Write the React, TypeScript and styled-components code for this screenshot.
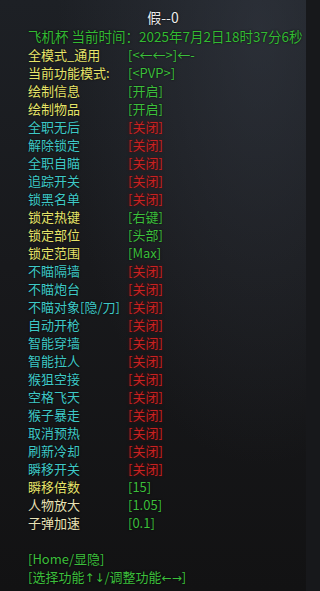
import styled, { createGlobalStyle } from 'styled-components';

const GlobalStyle = createGlobalStyle`
  html, body {
    margin: 0;
    padding: 0;
    background: #17181b;
  }
  body {
    font-family: "Noto Sans CJK SC", "Microsoft YaHei", sans-serif;
  }
`;

type Tone = 'yellow' | 'cyan' | 'cream' | 'green' | 'red';

const colors: Record<Tone, string> = {
  yellow: '#e6e46a',
  cyan: '#3ec8c6',
  cream: '#e9e2b6',
  green: '#3cbf3c',
  red: '#c82222',
};

const rows: [string, Tone, string, Tone][] = [
  ['全模式_通用', 'yellow', '[<←←>]←-', 'green'],
  ['当前功能模式:', 'yellow', '[<PVP>]', 'green'],
  ['绘制信息', 'yellow', '[开启]', 'green'],
  ['绘制物品', 'yellow', '[开启]', 'green'],
  ['全职无后', 'cyan', '[关闭]', 'red'],
  ['解除锁定', 'cyan', '[关闭]', 'red'],
  ['全职自瞄', 'cyan', '[关闭]', 'red'],
  ['追踪开关', 'cyan', '[关闭]', 'red'],
  ['锁黑名单', 'cyan', '[关闭]', 'red'],
  ['锁定热键', 'yellow', '[右键]', 'green'],
  ['锁定部位', 'yellow', '[头部]', 'green'],
  ['锁定范围', 'yellow', '[Max]', 'green'],
  ['不瞄隔墙', 'cyan', '[关闭]', 'red'],
  ['不瞄炮台', 'cyan', '[关闭]', 'red'],
  ['不瞄对象[隐/刀]', 'cyan', '[关闭]', 'red'],
  ['自动开枪', 'cyan', '[关闭]', 'red'],
  ['智能穿墙', 'cyan', '[关闭]', 'red'],
  ['智能拉人', 'cyan', '[关闭]', 'red'],
  ['猴狙空接', 'cyan', '[关闭]', 'red'],
  ['空格飞天', 'cyan', '[关闭]', 'red'],
  ['猴子暴走', 'cyan', '[关闭]', 'red'],
  ['取消预热', 'cyan', '[关闭]', 'red'],
  ['刷新冷却', 'cyan', '[关闭]', 'red'],
  ['瞬移开关', 'cyan', '[关闭]', 'red'],
  ['瞬移倍数', 'yellow', '[15]', 'green'],
  ['人物放大', 'cream', '[1.05]', 'green'],
  ['子弹加速', 'cream', '[0.1]', 'green'],
];

export default function App() {
  return (
    <>
      <GlobalStyle />
      <Screen>
        <Title>假--0</Title>
        <Clock>飞机杯 当前时间：2025年7月2日18时37分6秒</Clock>
        <List>
          {rows.map(([label, lt, value, vt], i) => (
            <Row key={i}>
              <Text tone={lt}>{label}</Text>
              <Text tone={vt}>{value}</Text>
            </Row>
          ))}
        </List>
        <Footer>
          <Text tone="green">[Home/显隐]</Text>
          <Text tone="green">
            [选择功能<Arrow>↑↓</Arrow>/调整功能<Arrow>←→</Arrow>]
          </Text>
        </Footer>
      </Screen>
    </>
  );
}

const Screen = styled.div`
  width: 306px;
  height: 591px;
  box-sizing: border-box;
  padding: 8px 0 0 28px;
  overflow: hidden;
  background:
    radial-gradient(ellipse at 85% 5%, rgba(60, 66, 78, 0.45), transparent 55%),
    linear-gradient(180deg, #1d2025 0%, #18191c 45%, #121213 100%);
  font-size: 13px;
  line-height: 18px;
  text-shadow: 0 0 2px rgba(0, 0, 0, 0.9);
`;

const Title = styled.div`
  margin-left: -28px;
  text-align: center;
  padding-left: 20px;
  color: #ececec;
  font-size: 14px;
  line-height: 19px;
`;

const Clock = styled.div`
  color: #33bb33;
  font-size: 13.5px;
  line-height: 18px;
  white-space: nowrap;
  margin-bottom: 1px;
`;

const List = styled.div`
  display: flex;
  flex-direction: column;
`;

const Row = styled.div`
  display: grid;
  grid-template-columns: 100px auto;
  white-space: nowrap;
`;

const Text = styled.span<{ tone: Tone }>`
  color: ${(p) => colors[p.tone]};
  white-space: nowrap;
  ${(p) => (p.tone === 'red' ? 'text-shadow: 0 0 3px rgba(90, 0, 0, 0.9);' : '')}
`;

const Arrow = styled.span`
  font-family: "DejaVu Sans", sans-serif;
  font-size: 12px;
`;

const Footer = styled.div`
  display: flex;
  flex-direction: column;
  margin-top: 18px;
`;
